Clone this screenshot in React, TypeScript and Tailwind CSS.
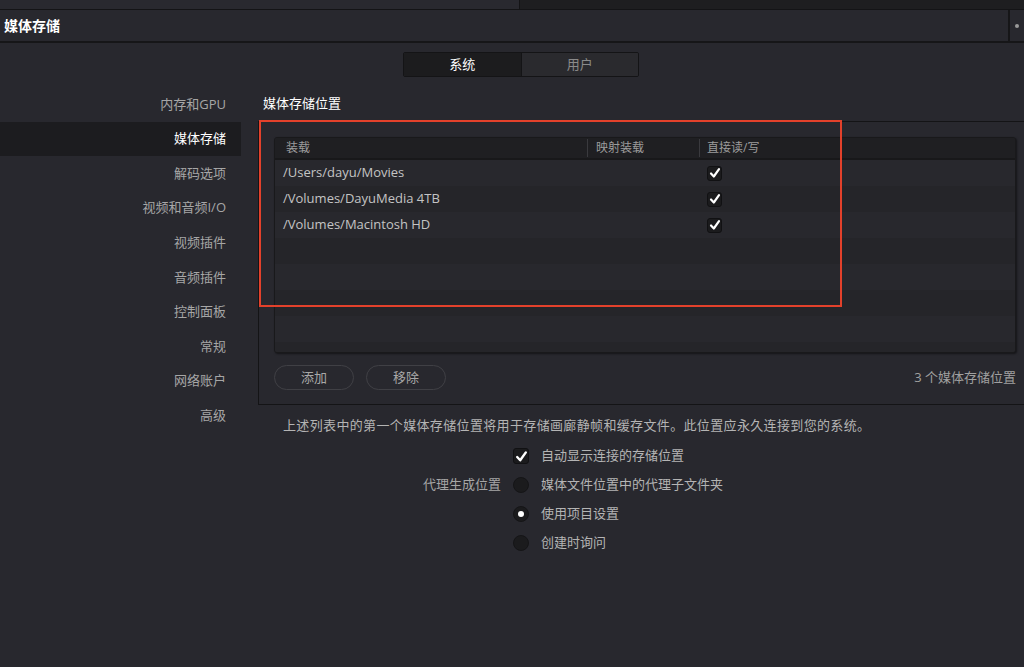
import React from "react";

const font = { fontFamily: '"Open Sans", "Noto Sans CJK SC", sans-serif' };

const navItems = [
  "内存和GPU",
  "媒体存储",
  "解码选项",
  "视频和音频I/O",
  "视频插件",
  "音频插件",
  "控制面板",
  "常规",
  "网络账户",
  "高级",
];

const mounts = ["/Users/dayu/Movies", "/Volumes/DayuMedia 4TB", "/Volumes/Macintosh HD"];

function Check({ size = 15 }: { size?: number }) {
  return (
    <div
      className="flex items-center justify-center rounded-[3px] border border-[#111113] bg-[#1b1b1d]"
      style={{ width: size, height: size }}
    >
      <svg width={size - 3} height={size - 3} viewBox="0 0 12 12">
        <path d="M2 6.5 L4.8 9.5 L10 2.2" stroke="#fff" strokeWidth="2.2" fill="none" strokeLinecap="round" strokeLinejoin="round" />
      </svg>
    </div>
  );
}

function Radio({ on }: { on?: boolean }) {
  return (
    <div className="flex h-4 w-4 items-center justify-center rounded-full border border-[#151517] bg-[#1b1b1d]">
      {on && <div className="h-[6px] w-[6px] rounded-full bg-white" />}
    </div>
  );
}

export default function App() {
  return (
    <div className="h-[667px] w-[1024px] overflow-hidden bg-[#28282e] text-[13px] text-[#b8b8b8]" style={font}>
      {/* top strip */}
      <div className="flex h-[10px] border-b border-[#141416]">
        <div className="w-[520px] border-r border-[#141416] bg-[#29292f]" />
        <div className="flex-1 bg-[#1e1e20]" />
      </div>

      {/* header */}
      <div className="flex h-[33px] items-center border-b-2 border-[#161618] bg-[#28282e]">
        <div className="flex-1 pl-1 text-[14px] font-bold text-white">媒体存储</div>
        <div className="flex h-full w-[16px] items-center justify-center border-l-2 border-[#161618]">
          <div className="h-[4px] w-[4px] rounded-full bg-[#9a9a9a]" />
        </div>
      </div>

      {/* tabs */}
      <div className="mt-[9px] flex justify-center pl-[18px]">
        <div className="flex h-[25px] w-[236px] overflow-hidden rounded-[2px] border border-[#141416]">
          <div className="flex flex-1 items-center justify-center border-r border-[#141416] bg-[#1c1c1e] text-white">系统</div>
          <div className="flex flex-1 items-center justify-center bg-[#2a2a2e] text-[#8a8a8a]">用户</div>
        </div>
      </div>

      <div className="mt-[10px] flex">
        {/* sidebar */}
        <div className="w-[241px] shrink-0">
          {navItems.map((item, i) => (
            <div
              key={item}
              className={`flex h-[34.6px] items-center justify-end pr-[15px] ${
                i === 1 ? "bg-[#1c1c1f] text-white" : "text-[#a6a6a6]"
              }`}
            >
              {item}
            </div>
          ))}
        </div>

        {/* content */}
        <div className="ml-[17px] flex-1">
          <div className="flex h-[34px] items-center pl-[5px] text-white">媒体存储位置</div>

          <div className="relative border-y border-l border-[#141416] pb-[14px] pl-[15px] pr-[8px] pt-[15px]">
            <div className="h-[216px] overflow-hidden rounded-[3px] border border-[#19191b] bg-[#26262b] shadow-[1px_1px_2px_rgba(0,0,0,0.5)]">
              <div className="flex h-[22px] items-center border-b-2 border-[#18181a] bg-[#1f1f22] text-[12px] text-[#9c9c9c]">
                <div className="w-[313px] border-r border-[#3a3a3e] pl-[11px]">装载</div>
                <div className="w-[112px] border-r border-[#3a3a3e] pl-[8px]">映射装载</div>
                <div className="pl-[7px]">直接读/写</div>
              </div>
              {Array.from({ length: 8 }).map((_, i) => (
                <div
                  key={i}
                  className={`flex h-[26px] items-center ${i % 2 === 0 ? "bg-[#28282d]" : "bg-[#252529]"}`}
                >
                  <div className="w-[313px] pl-[8px] text-[#c4c4c4]">{mounts[i] ?? ""}</div>
                  <div className="w-[112px]" />
                  <div className="pl-[7px]">{mounts[i] && <Check />}</div>
                </div>
              ))}
            </div>

            <div className="mt-[12px] flex items-center">
              <button className="h-[25px] w-[80px] rounded-full border border-[#404045] text-[#a8a8a8]">添加</button>
              <button className="ml-[12px] h-[25px] w-[80px] rounded-full border border-[#404045] text-[#a8a8a8]">移除</button>
              <div className="flex-1 text-right text-[#a0a0a0]">3 个媒体存储位置</div>
            </div>

            {/* annotation */}
            <div className="pointer-events-none absolute left-0 top-[-2px] h-[187px] w-[583px] border-2 border-[#e3412b]" />
          </div>

          <div className="mt-[11px] pl-[25px] tracking-[0.35px] text-[#b4b4b4]">
            上述列表中的第一个媒体存储位置将用于存储画廊静帧和缓存文件。此位置应永久连接到您的系统。
          </div>

          <div className="mt-[6px] flex flex-col">
            <div className="flex h-[29px] items-center">
              <div className="w-[243px]" />
              <div className="ml-[12px]">
                <Check size={16} />
              </div>
              <div className="ml-[12px] text-[#b4b4b4]">自动显示连接的存储位置</div>
            </div>
            <div className="flex h-[29px] items-center">
              <div className="w-[243px] text-right text-[#a6a6a6]">代理生成位置</div>
              <div className="ml-[12px]">
                <Radio />
              </div>
              <div className="ml-[12px] text-[#b4b4b4]">媒体文件位置中的代理子文件夹</div>
            </div>
            <div className="flex h-[29px] items-center">
              <div className="w-[243px]" />
              <div className="ml-[12px]">
                <Radio on />
              </div>
              <div className="ml-[12px] text-[#b4b4b4]">使用项目设置</div>
            </div>
            <div className="flex h-[29px] items-center">
              <div className="w-[243px]" />
              <div className="ml-[12px]">
                <Radio />
              </div>
              <div className="ml-[12px] text-[#b4b4b4]">创建时询问</div>
            </div>
          </div>
        </div>
      </div>
    </div>
  );
}
